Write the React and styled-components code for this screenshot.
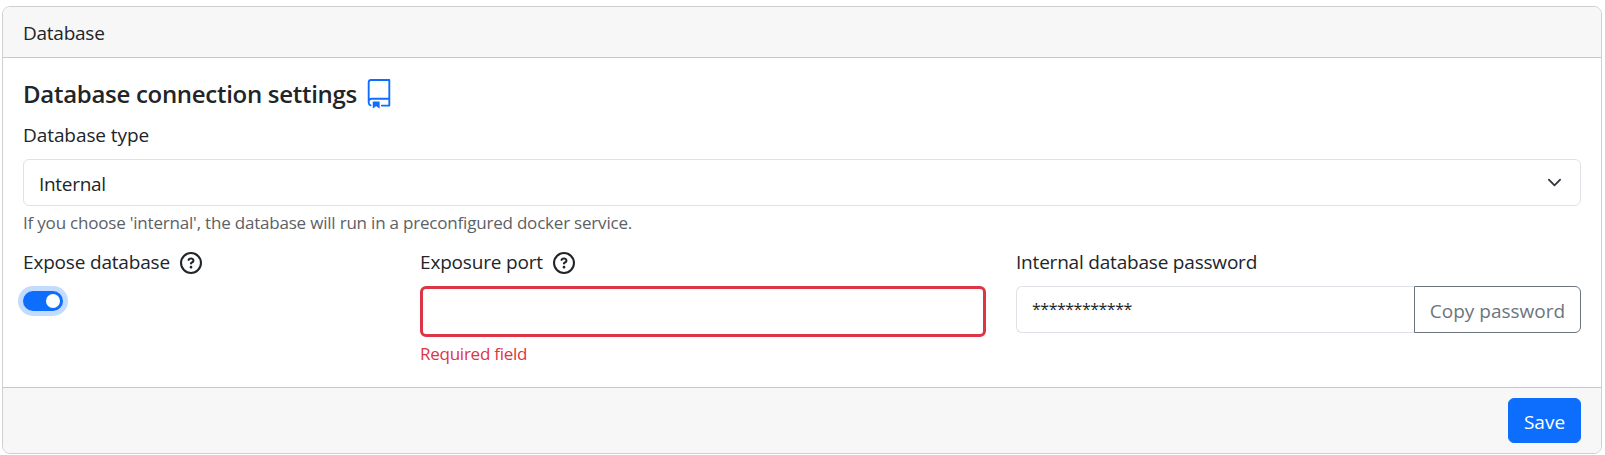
import React from "react";
import styled, { createGlobalStyle } from "styled-components";

const GlobalStyle = createGlobalStyle`
  *, *::before, *::after { box-sizing: border-box; }
  body {
    margin: 0;
    background: #fff;
    color: #212529;
    font-family: "Segoe UI", "Open Sans", "Noto Sans", sans-serif;
    font-size: 19px;
    line-height: 30px;
  }
`;

const Card = styled.section`
  display: flex;
  flex-direction: column;
  width: 1600px;
  height: 448px;
  margin: 6px 0 0 2px;
  border: 1px solid #cfcfcf;
  border-radius: 8px;
  overflow: hidden;
`;

const CardHeader = styled.header`
  height: 51px;
  padding: 11px 20px 9px;
  background: #f7f7f7;
  border-bottom: 1px solid #c8c8c8;
`;

const CardBody = styled.div`
  flex: 1;
  padding: 20px 20px 0;
`;

const CardFooter = styled.footer`
  display: flex;
  justify-content: flex-end;
  height: 66px;
  padding: 10px 20px;
  background: #f7f7f7;
  border-top: 1px solid #c8c8c8;
`;

const Text = styled.span`
  letter-spacing: ${(p) => p.$track ?? -0.18}px;
  white-space: nowrap;
`;

const Title = styled.h5`
  display: flex;
  align-items: center;
  height: 31px;
  margin: 0 0 10px;
  padding-top: 1px;
  font-size: 24px;
  font-weight: 550;
`;

const RepoIcon = styled.svg`
  width: 30px;
  height: 30px;
  margin: -1px 0 0 7px;
  fill: #0d6efd;
`;

const Label = styled.label`
  display: flex;
  align-items: center;
  height: 30px;
  margin-bottom: 10px;
  padding-top: 2px;
`;

const HelpIcon = styled.svg`
  width: 22px;
  height: 22px;
  margin: 2px 0 0 10px;
  fill: #212529;
`;

const Select = styled.div`
  display: flex;
  align-items: center;
  justify-content: space-between;
  height: 47px;
  padding: 2px 18px 0 15px;
  border: 1px solid #dee2e6;
  border-radius: 6px;
`;

const Chevron = styled.svg`
  width: 15px;
  height: 15px;
  margin-top: -3px;
  fill: none;
  stroke: #343a40;
  stroke-width: 2;
  stroke-linecap: round;
  stroke-linejoin: round;
`;

const Hint = styled.div`
  height: 26px;
  margin-top: 4px;
  line-height: 26px;
  font-size: 17px;
  color: ${(p) => (p.$error ? "#dc3545" : "#5c6166")};
`;

const Fields = styled.div`
  display: grid;
  grid-template-columns: 367px 566px 565px;
  column-gap: 30px;
  margin-top: 10px;
`;

const Switch = styled.button`
  display: flex;
  justify-content: flex-end;
  align-items: center;
  width: 40px;
  height: 20px;
  margin: 15px 0 0;
  padding: 0 3px;
  border: 0;
  border-radius: 10px;
  background: #0d6efd;
  box-shadow: 0 0 0 5px #c2dbff;
`;

const Thumb = styled.span`
  width: 14px;
  height: 14px;
  border-radius: 50%;
  background: #fff;
`;

const PortInput = styled.input`
  display: block;
  width: 100%;
  height: 51px;
  padding: 0 15px;
  border: 3px solid #dc3545;
  border-radius: 6px;
  outline: 0;
`;

const InputGroup = styled.div`
  display: flex;
  height: 47px;
`;

const PasswordBox = styled.div`
  flex: 1;
  padding: 7px 15px 0;
  font-size: 16px;
  border: 1px solid #dee2e6;
  border-right: 0;
  border-radius: 6px 0 0 6px;
`;

const Button = styled.button`
  display: flex;
  align-items: center;
  justify-content: center;
  width: ${(p) => p.$width}px;
  padding: 3px 0 0;
  font: inherit;
  color: #fff;
  background: #0d6efd;
  border: 1px solid #0d6efd;
  border-radius: 6px;
`;

const CopyButton = styled(Button)`
  color: #6c757d;
  background: #fff;
  border-color: #6c757d;
  border-radius: 0 6px 6px 0;
`;

const Help = () => (
  <HelpIcon viewBox="0 0 16 16">
    <path d="M0 8a8 8 0 1 1 16 0A8 8 0 0 1 0 8Zm8-6.5a6.5 6.5 0 1 0 0 13 6.5 6.5 0 0 0 0-13ZM6.92 6.085h.001a.749.749 0 1 1-1.342-.67c.169-.339.436-.701.849-.977C6.845 4.16 7.369 4 8 4a2.756 2.756 0 0 1 1.637.525c.503.377.863.965.863 1.725 0 .448-.115.83-.329 1.15-.205.307-.47.513-.692.662-.109.072-.22.138-.313.195l-.006.004a6.24 6.24 0 0 0-.26.16.952.952 0 0 0-.276.245.75.75 0 0 1-1.248-.832c.184-.264.42-.489.692-.661.103-.067.207-.132.313-.195l.007-.004c.1-.061.182-.11.258-.161a.969.969 0 0 0 .277-.245C8.96 6.514 9 6.427 9 6.25a.612.612 0 0 0-.262-.525A1.27 1.27 0 0 0 8 5.5c-.369 0-.595.09-.74.187a1.01 1.01 0 0 0-.34.398ZM9 11a1 1 0 1 1-2 0 1 1 0 0 1 2 0Z" />
  </HelpIcon>
);

export default function App() {
  return (
    <>
      <GlobalStyle />
      <Card>
        <CardHeader>
          <Text $track={-0.25}>Database</Text>
        </CardHeader>
        <CardBody>
          <Title>
            <Text $track={-0.29}>Database connection settings</Text>
            <RepoIcon viewBox="0 0 24 24">
              <path d="M3 2.75A2.75 2.75 0 0 1 5.75 0h14.5a.75.75 0 0 1 .75.75v20.5a.75.75 0 0 1-.75.75h-6a.75.75 0 0 1 0-1.5h5.25v-4H6A1.5 1.5 0 0 0 4.5 18v.75c0 .716.43 1.334 1.05 1.605a.75.75 0 0 1-.6 1.374A3.251 3.251 0 0 1 3 18.75ZM19.5 1.5H5.75c-.69 0-1.25.56-1.25 1.25v12.651A2.989 2.989 0 0 1 6 15h13.5Z" />
              <path d="M7 18.25a.25.25 0 0 1 .25-.25h5a.25.25 0 0 1 .25.25v5.01a.25.25 0 0 1-.397.201l-2.206-1.604a.25.25 0 0 0-.294 0L7.397 23.46a.25.25 0 0 1-.397-.2Z" />
            </RepoIcon>
          </Title>
          <Label>
            <Text $track={-0.08}>Database type</Text>
          </Label>
          <Select>
            <Text $track={-0.3}>Internal</Text>
            <Chevron viewBox="0 0 16 16">
              <path d="m2 5 6 6 6-6" />
            </Chevron>
          </Select>
          <Hint>
            <Text $track={-0.2}>If you choose 'internal', the database will run in a preconfigured docker service.</Text>
          </Hint>
          <Fields>
            <div>
              <Label>
                <Text>Expose database</Text>
                <Help />
              </Label>
              <Switch aria-label="Expose database">
                <Thumb />
              </Switch>
            </div>
            <div>
              <Label>
                <Text>Exposure port</Text>
                <Help />
              </Label>
              <PortInput aria-label="Exposure port" />
              <Hint $error>
                <Text $track={-0.25}>Required field</Text>
              </Hint>
            </div>
            <div>
              <Label>
                <Text $track={-0.2}>Internal database password</Text>
              </Label>
              <InputGroup>
                <PasswordBox>
                  <Text $track={-0.5}>************</Text>
                </PasswordBox>
                <CopyButton $width={167}>
                  <Text $track={0}>Copy password</Text>
                </CopyButton>
              </InputGroup>
            </div>
          </Fields>
        </CardBody>
        <CardFooter>
          <Button $width={73}>
            <Text $track={0}>Save</Text>
          </Button>
        </CardFooter>
      </Card>
    </>
  );
}
